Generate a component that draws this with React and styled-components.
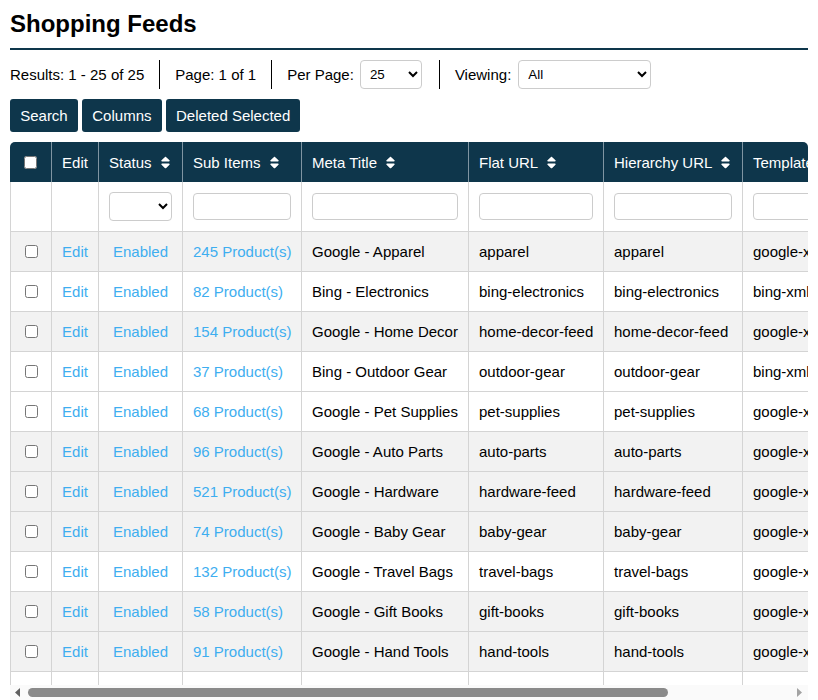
import React from 'react';
import styled, { createGlobalStyle } from 'styled-components';
import { FaSort } from 'react-icons/fa';

const navy = '#0e364b';

const GlobalStyle = createGlobalStyle`
  html, body {
    margin: 0;
    height: 100%;
    overflow: hidden;
    background: #fff;
  }
  body {
    font-family: "Liberation Sans", Arial, sans-serif;
    font-size: 15px;
    color: #000;
  }
`;

const Page = styled.div`
  display: flex;
  flex-direction: column;
  width: 818px;
  height: 700px;
  padding: 0 10px;
  box-sizing: border-box;
`;

const Title = styled.h1`
  margin: 0;
  height: 48px;
  line-height: 48px;
  font-size: 24px;
  font-weight: bold;
  border-bottom: 2px solid ${navy};
`;

const Toolbar = styled.div`
  display: flex;
  align-items: center;
  height: 29px;
  margin-top: 10px;
`;

const Segment = styled.div`
  display: flex;
  align-items: center;
  height: 100%;
  gap: ${({ $gap }) => $gap || 6}px;
  padding: 0 ${({ $end }) => $end || 15}px 0 15px;
  border-right: 1px solid #000;

  &:first-child {
    padding-left: 0;
  }
  &:last-child {
    border-right: 0;
  }
`;

const Select = styled.select`
  height: 29px;
  width: ${({ $width }) => $width}px;
  padding: 0 5px;
  font-family: inherit;
  font-size: 13.33px;
  color: #000;
  background: #fff;
  border: 1px solid #ccc;
  border-radius: 4px;
  box-sizing: border-box;
`;

const Actions = styled.div`
  display: flex;
  gap: 4.2px;
  margin-top: 10px;
`;

const Button = styled.button`
  height: 33px;
  padding: 0 10.2px;
  font-family: inherit;
  font-size: 15px;
  color: #fff;
  background: ${navy};
  border: 0;
  border-radius: 3px;
`;

const TableClip = styled.div`
  flex: 1;
  min-height: 0;
  margin-top: 10px;
  overflow: hidden;
  border-radius: 5px 5px 0 0;
`;

const Table = styled.table`
  border-collapse: separate;
  border-spacing: 0;
  table-layout: fixed;
  width: 941px;
`;

const HeadCell = styled.th`
  width: ${({ $width }) => $width}px;
  height: 40px;
  padding: 0 10px;
  box-sizing: border-box;
  text-align: ${({ $center }) => ($center ? 'center' : 'left')};
  font-weight: normal;
  color: #fff;
  background: ${navy};
  white-space: nowrap;
  border-right: 1px solid #7f95a2;

  &:last-child {
    border-right: 0;
  }
`;

const SortIcon = styled(FaSort)`
  margin-left: 6px;
  vertical-align: -2px;
`;

const FilterRow = styled.tr`
  height: 50px;
`;

const Row = styled.tr`
  height: 40px;
  background: ${({ $shaded }) => ($shaded ? '#f2f2f2' : '#fff')};
`;

const Cell = styled.td`
  padding: 0 10px;
  box-sizing: border-box;
  white-space: nowrap;
  overflow: hidden;
  text-align: ${({ $center }) => ($center ? 'center' : 'left')};
  border-right: 1px solid #d4d4d4;
  border-bottom: 1px solid #d4d4d4;

  &:first-child {
    border-left: 1px solid #d4d4d4;
  }
  &:last-child {
    border-right: 0;
  }
`;

const Link = styled.a`
  color: #3eaef0;
  text-decoration: none;
`;

const Check = styled.input.attrs({ type: 'checkbox' })`
  display: block;
  width: 13px;
  height: 13px;
  margin: 0 auto;
`;

const FilterInput = styled.input`
  display: block;
  width: 100%;
  height: 27px;
  padding: 0 6px;
  border: 1px solid #ccc;
  border-radius: 4px;
  box-sizing: border-box;
`;

const FilterSelect = styled.select`
  display: block;
  width: 100%;
  height: 29px;
  background: #fff;
  border: 1px solid #ccc;
  border-radius: 4px;
  box-sizing: border-box;
`;

const ScrollTrack = styled.div`
  display: flex;
  align-items: center;
  flex: none;
  height: 15px;
  padding: 0 6px 0 5px;
  background: #fafafa;
`;

const ScrollArrow = styled.svg`
  flex: none;
  width: 5px;
  height: 9px;
  fill: ${({ $dim }) => ($dim ? '#a3a3a3' : '#606060')};
`;

const ScrollThumb = styled.div`
  width: 640px;
  height: 9px;
  margin: 0 auto 0 8px;
  background: #8a8a8a;
  border-radius: 5px;
`;

const columns = [
  { label: 'Status', width: 84 },
  { label: 'Sub Items', width: 119 },
  { label: 'Meta Title', width: 167 },
  { label: 'Flat URL', width: 135 },
  { label: 'Hierarchy URL', width: 139 },
  { label: 'Template', width: 208 },
];

const feeds = [
  { count: 245, title: 'Google - Apparel', flat: 'apparel', template: 'google-xml', shaded: true },
  { count: 82, title: 'Bing - Electronics', flat: 'bing-electronics', template: 'bing-xml' },
  { count: 154, title: 'Google - Home Decor', flat: 'home-decor-feed', template: 'google-xml', shaded: true },
  { count: 37, title: 'Bing - Outdoor Gear', flat: 'outdoor-gear', template: 'bing-xml' },
  { count: 68, title: 'Google - Pet Supplies', flat: 'pet-supplies', template: 'google-xml' },
  { count: 96, title: 'Google - Auto Parts', flat: 'auto-parts', template: 'google-xml', shaded: true },
  { count: 521, title: 'Google - Hardware', flat: 'hardware-feed', template: 'google-xml', shaded: true },
  { count: 74, title: 'Google - Baby Gear', flat: 'baby-gear', template: 'google-xml', shaded: true },
  { count: 132, title: 'Google - Travel Bags', flat: 'travel-bags', template: 'google-xml' },
  { count: 58, title: 'Google - Gift Books', flat: 'gift-books', template: 'google-xml', shaded: true },
  { count: 91, title: 'Google - Hand Tools', flat: 'hand-tools', template: 'google-xml', shaded: true },
];

export default function App() {
  return (
    <Page>
      <GlobalStyle />
      <Title>Shopping Feeds</Title>
      <Toolbar>
        <Segment>Results: 1 - 25 of 25</Segment>
        <Segment>Page: 1 of 1</Segment>
        <Segment $end={17}>
          Per Page:
          <Select $width={62} defaultValue="25">
            <option>25</option>
            <option>50</option>
          </Select>
        </Segment>
        <Segment $gap={7}>
          Viewing:
          <Select $width={133} defaultValue="All">
            <option>All</option>
          </Select>
        </Segment>
      </Toolbar>
      <Actions>
        <Button>Search</Button>
        <Button>Columns</Button>
        <Button>Deleted Selected</Button>
      </Actions>
      <TableClip>
        <Table>
          <thead>
            <tr>
              <HeadCell $width={42} $center><Check /></HeadCell>
              <HeadCell $width={47} $center>Edit</HeadCell>
              {columns.map((col) => (
                <HeadCell key={col.label} $width={col.width}>
                  {col.label}
                  <SortIcon size={15} />
                </HeadCell>
              ))}
            </tr>
          </thead>
          <tbody>
            <FilterRow>
              <Cell />
              <Cell />
              <Cell><FilterSelect /></Cell>
              <Cell><FilterInput /></Cell>
              <Cell><FilterInput /></Cell>
              <Cell><FilterInput /></Cell>
              <Cell><FilterInput /></Cell>
              <Cell><FilterInput /></Cell>
            </FilterRow>
            {feeds.map((feed) => (
              <Row key={feed.flat} $shaded={feed.shaded}>
                <Cell><Check /></Cell>
                <Cell $center><Link href="#">Edit</Link></Cell>
                <Cell $center><Link href="#">Enabled</Link></Cell>
                <Cell><Link href="#">{feed.count} Product(s)</Link></Cell>
                <Cell>{feed.title}</Cell>
                <Cell>{feed.flat}</Cell>
                <Cell>{feed.flat}</Cell>
                <Cell>{feed.template}</Cell>
              </Row>
            ))}
            <Row>
              <Cell /><Cell /><Cell /><Cell /><Cell /><Cell /><Cell /><Cell />
            </Row>
          </tbody>
        </Table>
      </TableClip>
      <ScrollTrack>
        <ScrollArrow viewBox="0 0 5 9"><path d="M5 0v9L0 4.5z" /></ScrollArrow>
        <ScrollThumb />
        <ScrollArrow $dim viewBox="0 0 5 9"><path d="M0 0v9l5-4.5z" /></ScrollArrow>
      </ScrollTrack>
    </Page>
  );
}
